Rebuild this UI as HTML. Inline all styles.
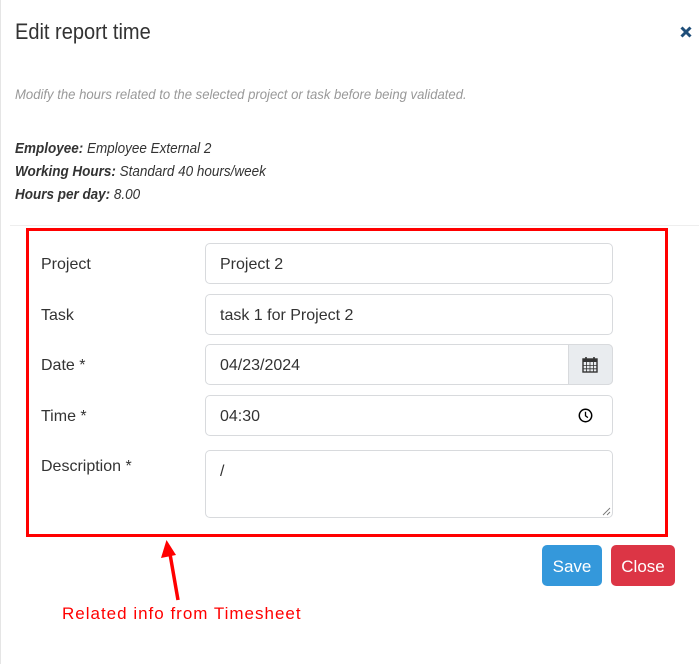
<!DOCTYPE html>
<html><head><meta charset="utf-8"><style>
*{box-sizing:border-box;margin:0;padding:0}
body{width:699px;height:664px;background:#fff;font-family:"Liberation Sans",sans-serif;position:relative;overflow:hidden;color:#333}
.a{position:absolute;white-space:nowrap}
.cond{transform:scaleX(.93);transform-origin:left center}
.inp{position:absolute;left:205px;width:408px;height:41px;border:1px solid #d8dadd;border-radius:5px;font-size:16px;color:#333;padding-left:14px;line-height:41px}
.lbl{position:absolute;left:41px;font-size:16px;color:#333}
.btn{position:absolute;top:545px;height:41px;border-radius:5px;color:#fff;font-size:17px;text-align:center;line-height:43px}
</style></head><body>
<div style="position:absolute;left:0;top:0;width:1px;height:664px;background:#e5e5e5"></div>
<div class="a" style="left:15px;top:19px;font-size:22px;color:#333;transform:scaleX(.91);transform-origin:left center">Edit report time</div>
<svg class="a" style="left:679px;top:25px" width="14" height="14" viewBox="0 0 14 14"><path d="M2.5 2.5L11.5 11.5M11.5 2.5L2.5 11.5" stroke="#1f4e79" stroke-width="3"/></svg>
<div class="a" style="left:15px;top:86px;font-size:14px;font-style:italic;color:#999;transform:scaleX(.936);transform-origin:left center">Modify the hours related to the selected project or task before being validated.</div>
<div class="a cond" style="left:15px;top:141px;font-size:14.5px;font-style:italic;color:#333"><b>Employee:</b> Employee External 2</div>
<div class="a cond" style="left:15px;top:164px;font-size:14.5px;font-style:italic;color:#333"><b>Working Hours:</b> Standard 40 hours/week</div>
<div class="a cond" style="left:15px;top:187px;font-size:14.5px;font-style:italic;color:#333"><b>Hours per day:</b> 8.00</div>
<div style="position:absolute;left:10px;top:225px;width:689px;height:1px;background:#eee"></div>
<div style="position:absolute;left:26px;top:228px;width:642px;height:309px;border:3px solid #ff0000"></div>
<div class="lbl" style="top:256px">Project</div>
<div class="lbl" style="top:307px">Task</div>
<div class="lbl" style="top:357px">Date *</div>
<div class="lbl" style="top:408px">Time *</div>
<div class="lbl" style="top:458px">Description *</div>
<div class="inp" style="top:243px">Project 2</div>
<div class="inp" style="top:294px">task 1 for Project 2</div>
<div class="inp" style="top:344px;border-radius:5px">04/23/2024</div>
<div style="position:absolute;left:568px;top:344px;width:45px;height:41px;background:#e9ecef;border:1px solid #d8dadd;border-radius:0 5px 5px 0"></div>
<svg class="a" style="left:582px;top:356px" width="16" height="17" viewBox="0 0 16 17"><rect x="1" y="3" width="14" height="13" fill="none" stroke="#333" stroke-width="1.4"/><rect x="1" y="3" width="14" height="3" fill="#333"/><path d="M4 1v4M12 1v4" stroke="#333" stroke-width="1.6"/><path d="M1 9.5h14M1 12.8h14M4.5 6v10M8 6v10M11.5 6v10" stroke="#333" stroke-width=".8"/></svg>
<div class="inp" style="top:395px">04:30</div>
<svg class="a" style="left:578px;top:408px" width="15" height="15" viewBox="0 0 15 15"><circle cx="7.5" cy="7.5" r="6.2" fill="none" stroke="#000" stroke-width="1.5"/><path d="M7.5 3.8v4l2.4 1.8" fill="none" stroke="#000" stroke-width="1.3"/></svg>
<div class="inp" style="top:450px;height:68px;line-height:normal;padding-top:12px">/</div>
<svg class="a" style="left:602px;top:507px" width="9" height="9" viewBox="0 0 9 9"><path d="M1 8L8 1M5 8L8 5" stroke="#777" stroke-width=".9"/></svg>
<div class="btn" style="left:542px;width:60px;background:#3498db">Save</div>
<div class="btn" style="left:611px;width:64px;background:#dc3545">Close</div>
<svg class="a" style="left:150px;top:536px" width="40" height="70" viewBox="0 0 40 70"><path d="M28 64L20 18" stroke="#ff0000" stroke-width="3.5"/><path d="M16.5 4L11 22L26 19Z" fill="#ff0000"/></svg>
<div class="a" style="left:62px;top:604px;font-size:17px;color:#ff0000;letter-spacing:1px">Related info from Timesheet</div>
</body></html>
